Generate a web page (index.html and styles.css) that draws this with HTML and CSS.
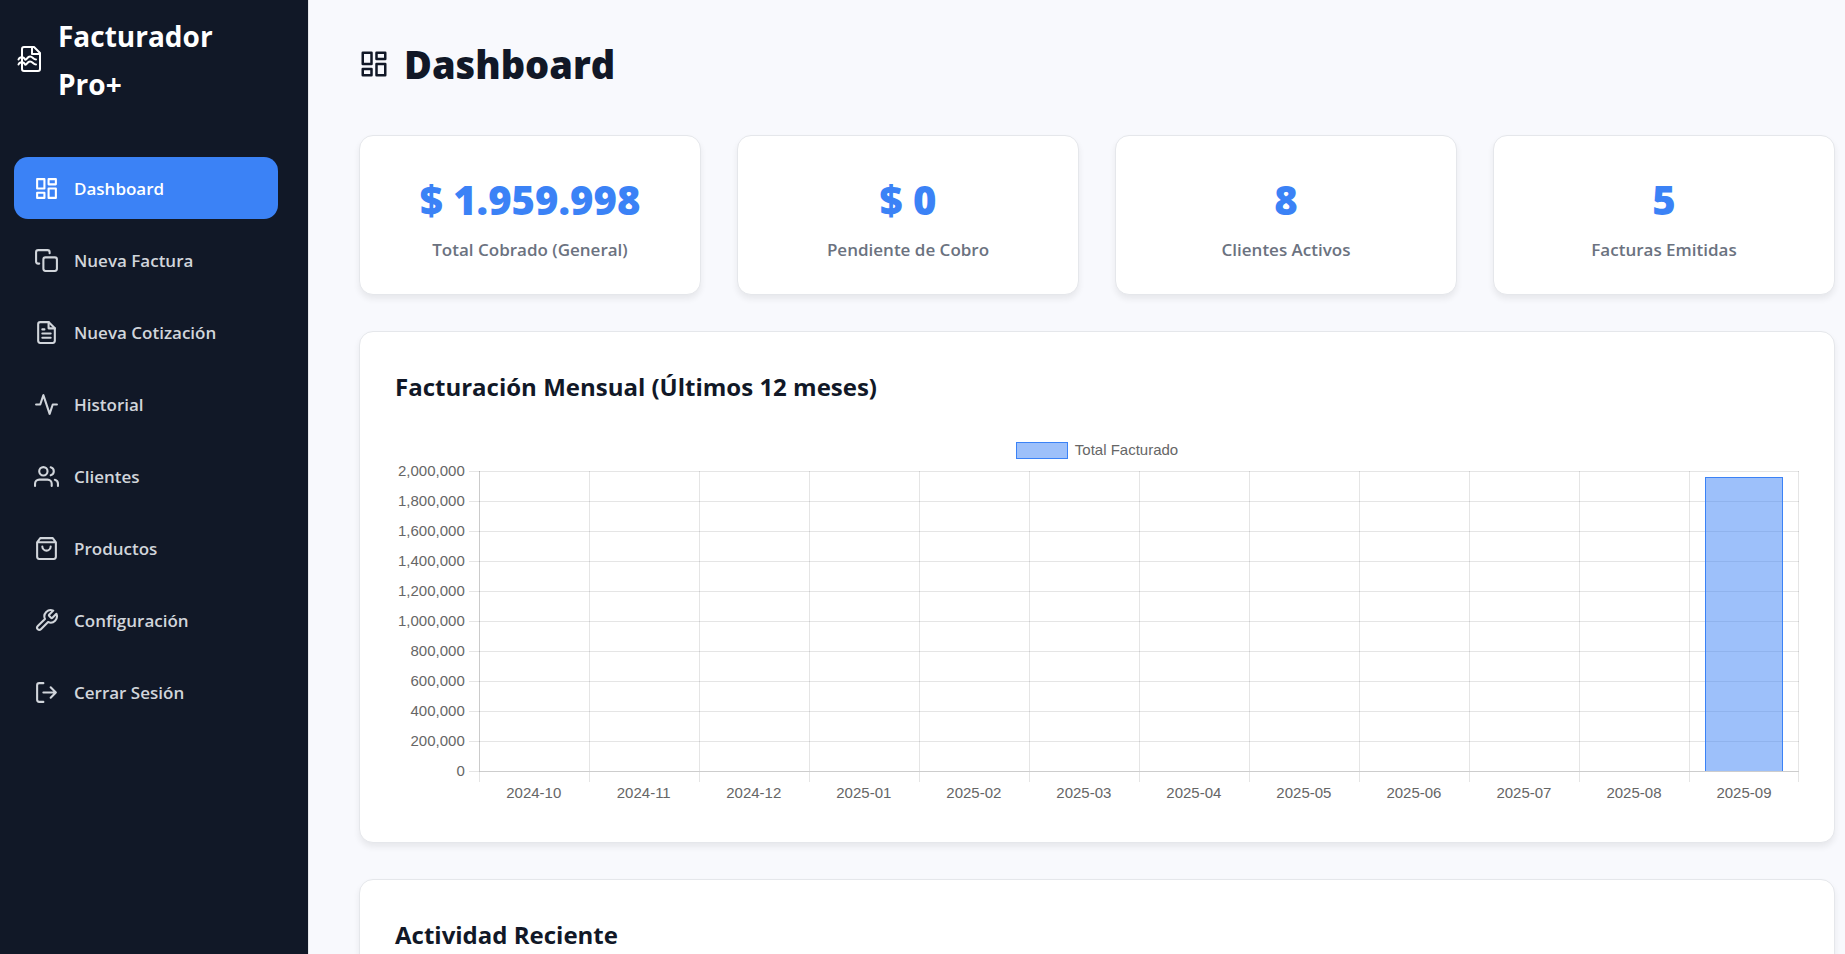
FILE: index.html
```
<!DOCTYPE html>
<html lang="es">
<head>
<meta charset="utf-8">
<meta name="viewport" content="width=device-width, initial-scale=1">
<title>Facturador Pro+ - Dashboard</title>
<link rel="stylesheet" href="styles.css">
</head>
<body>
<div class="app">
  <aside class="sidebar">
    <div class="brand">
      <svg class="brand-icon" viewBox="0 0 30 30"><path d="M20 2H10a2 2 0 0 0-2 2v20a2 2 0 0 0 2 2h14a2 2 0 0 0 2-2V8z"/><path d="M18 2v7h8"/><path d="M4.500 14.500c1-3 5.500-3 6.500 0c2 1 2-3 5-3s3 3 6 3M4.500 19.500c1-3 5.500-3 6.500 0c2 1 2-3 5-3s3 3 6 3"/></svg>
      <span>Facturador Pro+</span>
    </div>
    <nav class="menu">
      <a class="item active" href="#"><svg class="icon" viewBox="0 0 24 24"><path d="M3 3h7v9H3zM14 3h7v5h-7zM14 12h7v9h-7zM3 16h7v5H3z"/></svg>Dashboard</a>
      <a class="item" href="#"><svg class="icon" viewBox="0 0 24 24"><rect x="9" y="9" width="13" height="13" rx="2"/><path d="M5 15H4a2 2 0 0 1-2-2V4a2 2 0 0 1 2-2h9a2 2 0 0 1 2 2v1"/></svg>Nueva Factura</a>
      <a class="item" href="#"><svg class="icon" viewBox="0 0 24 24"><path d="M14 2H6a2 2 0 0 0-2 2v16a2 2 0 0 0 2 2h12a2 2 0 0 0 2-2V8z"/><path d="M14 2v6h6M16 13H8M16 17H8M10 9H8"/></svg>Nueva Cotización</a>
      <a class="item" href="#"><svg class="icon" viewBox="0 0 24 24"><path d="M22 12h-4l-3 9L9 3l-3 9H2"/></svg>Historial</a>
      <a class="item" href="#"><svg class="icon" viewBox="0 0 24 24"><path d="M17 21v-2a4 4 0 0 0-4-4H5a4 4 0 0 0-4 4v2"/><circle cx="9" cy="7" r="4"/><path d="M23 21v-2a4 4 0 0 0-3-3.870M16 3.130a4 4 0 0 1 0 7.750"/></svg>Clientes</a>
      <a class="item" href="#"><svg class="icon" viewBox="0 0 24 24"><path d="M6 2L3 6v14a2 2 0 0 0 2 2h14a2 2 0 0 0 2-2V6l-3-4zM3 6h18M16 10a4 4 0 0 1-8 0"/></svg>Productos</a>
      <a class="item" href="#"><svg class="icon" viewBox="0 0 24 24"><path d="M14.700 6.300a1 1 0 0 0 0 1.400l1.600 1.600a1 1 0 0 0 1.400 0l3.770-3.770a6 6 0 0 1-7.940 7.940l-6.910 6.910a2.120 2.120 0 0 1-3-3l6.910-6.910a6 6 0 0 1 7.940-7.940l-3.760 3.760z"/></svg>Configuración</a>
      <a class="item" href="#"><svg class="icon" viewBox="0 0 24 24"><path d="M9 21H5a2 2 0 0 1-2-2V5a2 2 0 0 1 2-2h4M16 17l5-5-5-5M21 12H9"/></svg>Cerrar Sesión</a>
    </nav>
  </aside>
  <main class="main">
    <h1 class="title"><svg class="title-icon" viewBox="0 0 24 24"><path d="M3 3h7v9H3zM14 3h7v5h-7zM14 12h7v9h-7zM3 16h7v5H3z"/></svg>Dashboard</h1>
    <section class="stats">
      <div class="card stat"><strong>$ 1.959.998</strong><span>Total Cobrado (General)</span></div>
      <div class="card stat"><strong>$ 0</strong><span>Pendiente de Cobro</span></div>
      <div class="card stat"><strong>8</strong><span>Clientes Activos</span></div>
      <div class="card stat"><strong>5</strong><span>Facturas Emitidas</span></div>
    </section>
    <section class="card panel">
      <h2>Facturación Mensual (Últimos 12 meses)</h2>
      <div class="legend"><i></i>Total Facturado</div>
      <div class="chart">
        <div class="y-axis"><span>2,000,000</span><span>1,800,000</span><span>1,600,000</span><span>1,400,000</span><span>1,200,000</span><span>1,000,000</span><span>800,000</span><span>600,000</span><span>400,000</span><span>200,000</span><span>0</span></div>
        <div class="plot">
          <div class="month"><div class="cell"></div><span>2024-10</span></div>
          <div class="month"><div class="cell"></div><span>2024-11</span></div>
          <div class="month"><div class="cell"></div><span>2024-12</span></div>
          <div class="month"><div class="cell"></div><span>2025-01</span></div>
          <div class="month"><div class="cell"></div><span>2025-02</span></div>
          <div class="month"><div class="cell"></div><span>2025-03</span></div>
          <div class="month"><div class="cell"></div><span>2025-04</span></div>
          <div class="month"><div class="cell"></div><span>2025-05</span></div>
          <div class="month"><div class="cell"></div><span>2025-06</span></div>
          <div class="month"><div class="cell"></div><span>2025-07</span></div>
          <div class="month"><div class="cell"></div><span>2025-08</span></div>
          <div class="month"><div class="cell"><div class="bar" style="height:98%"></div></div><span>2025-09</span></div>
        </div>
      </div>
    </section>
    <section class="card panel">
      <h2>Actividad Reciente</h2>
    </section>
  </main>
</div>
</body>
</html>
```
FILE: styles.css
```
* { box-sizing: border-box; }
body {
  margin: 0;
  background: #f8f9fd;
  color: #111827;
  font-family: "Segoe UI", "Open Sans", "Noto Sans", sans-serif;
}
svg {
  flex: none;
  fill: none;
  stroke: currentColor;
  stroke-width: 2;
  stroke-linecap: round;
  stroke-linejoin: round;
}
.app { display: flex; height: 100vh; overflow: hidden; }

.sidebar {
  flex: none;
  width: 309px;
  padding: 12px 30px 12px 14px;
  background: #111827;
  border-right: 1px solid #e5e7eb;
}
.brand {
  display: flex;
  align-items: center;
  gap: 14px;
  margin-bottom: 49px;
  color: #fff;
  font-size: 28px;
  font-weight: 700;
  line-height: 48px;
}
.brand-icon { width: 30px; height: 30px; }
.menu { display: flex; flex-direction: column; gap: 10px; }
.item {
  display: flex;
  align-items: center;
  gap: 15px;
  height: 62px;
  padding: 0 20px;
  border-radius: 14px;
  color: #d1d5db;
  font-size: 17px;
  font-weight: 600;
  text-decoration: none;
}
.item.active { background: #3b82f6; color: #fff; }
.icon { width: 25px; height: 25px; }

.main { flex: 1; min-width: 0; padding: 30px 10px 36px 50px; }
.title {
  display: flex;
  align-items: center;
  gap: 15px;
  margin: 0 0 37px;
  font-size: 38px;
  font-weight: 800;
  line-height: 68px;
}
.title-icon { width: 30px; height: 30px; }
.card {
  background: #fff;
  border: 1px solid #e5e7eb;
  border-radius: 14px;
  box-shadow: 0 4px 6px rgba(0, 0, 0, .07);
}
.stats { display: grid; grid-template-columns: repeat(4, 1fr); gap: 36px; }
.stat {
  display: flex;
  flex-direction: column;
  align-items: center;
  height: 160px;
  padding-top: 35px;
}
.stat strong { color: #3b82f6; font-size: 40px; font-weight: 800; line-height: 58px; }
.stat span { color: #6b7280; font-size: 17px; font-weight: 600; line-height: 42px; }

.panel { margin-top: 36px; padding: 36px 35px; }
.panel h2 { margin: 0; font-size: 24px; font-weight: 700; line-height: 38px; }

.legend {
  display: flex;
  justify-content: center;
  align-items: center;
  gap: 7px;
  margin-top: 35px;
  color: #666;
  font: 15px/18px "Liberation Sans", Arial, sans-serif;
}
.legend i {
  width: 52px;
  height: 17px;
  background: rgba(59, 130, 246, .5);
  border: 1px solid #3b82f6;
}
.chart {
  display: flex;
  gap: 4px;
  margin-top: -3px;
  padding-bottom: 2px;
  color: #666;
  font: 15px/30px "Liberation Sans", Arial, sans-serif;
}
.y-axis { display: flex; flex-direction: column; padding-left: 3px; text-align: right; }
.plot {
  flex: 1;
  display: grid;
  grid-template-columns: repeat(12, 1fr);
  margin-top: 15px;
  padding-left: 10px;
  background: repeating-linear-gradient(#e5e5e5 0 1px, transparent 1px 30px) top / 100% 301px no-repeat;
}
.month { display: flex; flex-direction: column; text-align: center; }
.month::before { content: ""; order: 1; height: 10px; border-left: 1px solid rgba(0, 0, 0, .1); }
.month span { order: 2; line-height: 22px; }
.cell {
  display: flex;
  align-items: flex-end;
  justify-content: center;
  height: 301px;
  border-left: 1px solid rgba(0, 0, 0, .1);
  border-bottom: 1px solid rgba(0, 0, 0, .1);
}
.month:first-child .cell { border-left-color: rgba(0, 0, 0, .2); }
.month:last-child .cell,
.month:last-child::before { border-right: 1px solid rgba(0, 0, 0, .1); }
.bar {
  width: 72%;
  background: rgba(59, 130, 246, .5);
  border: 1px solid #3b82f6;
  border-bottom: 0;
}
```
